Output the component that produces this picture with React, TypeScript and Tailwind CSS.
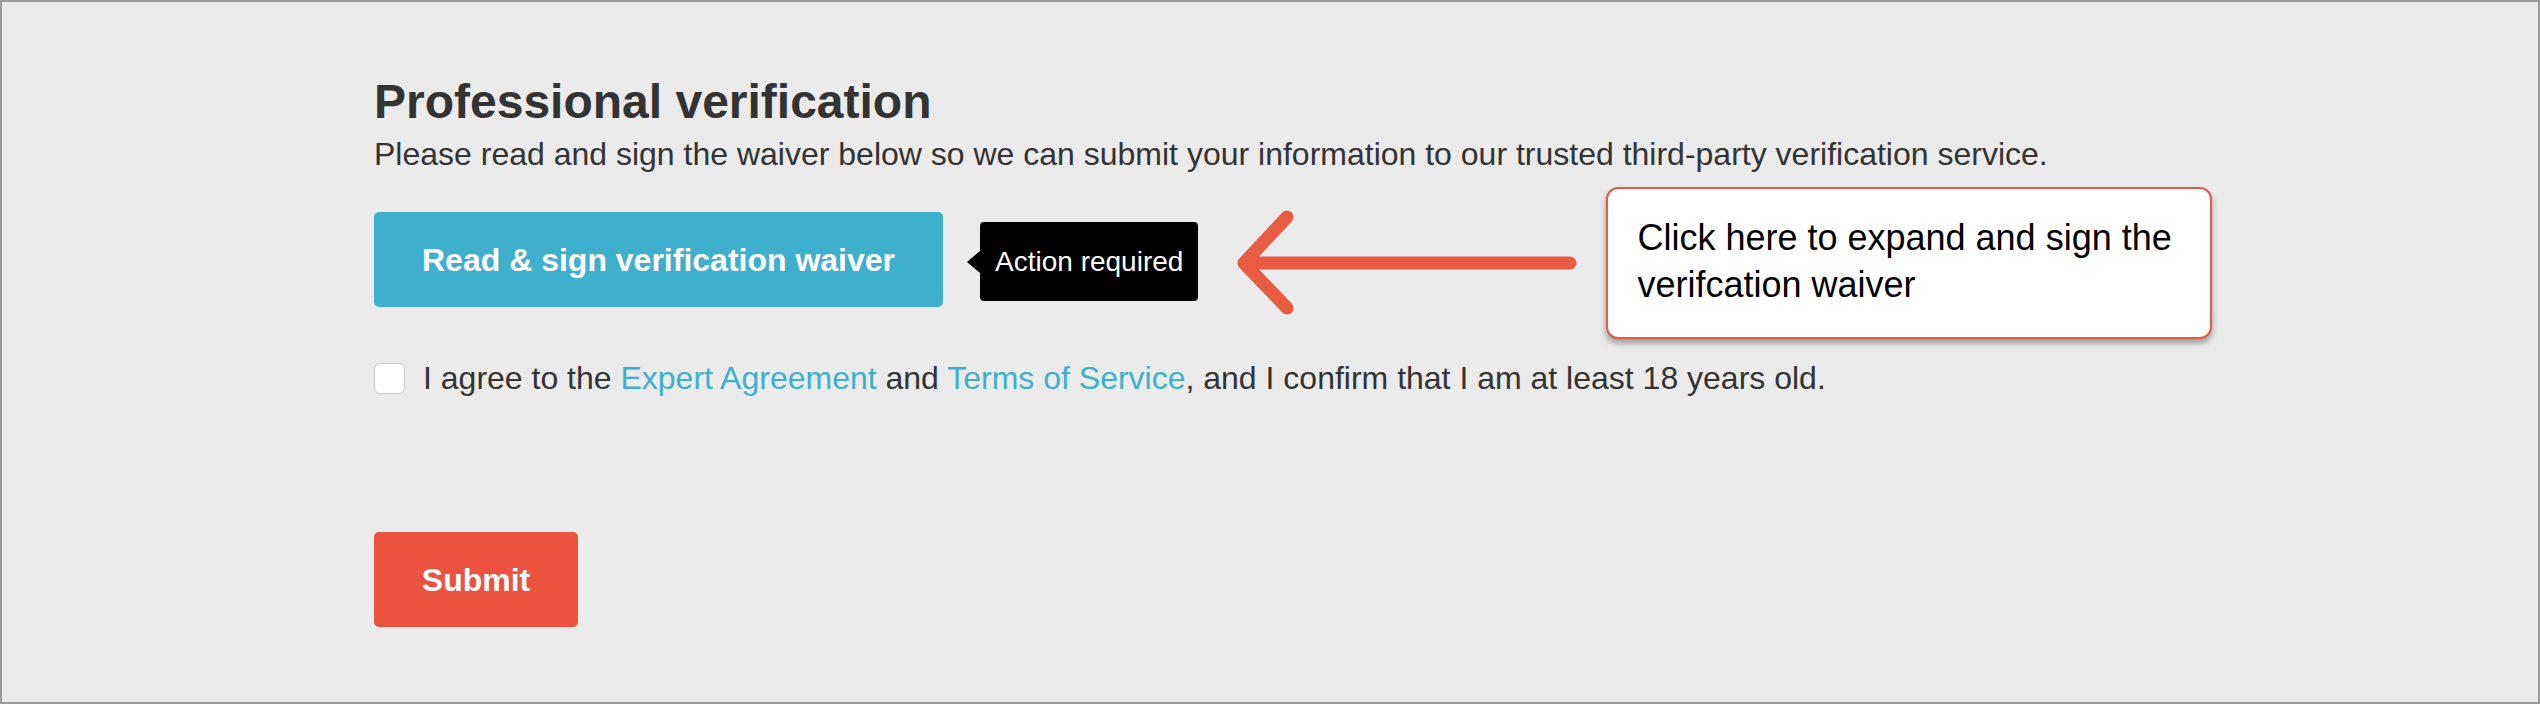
import React from 'react';

const font = { fontFamily: '"Liberation Sans", Arial, Helvetica, sans-serif' };

// little black tooltip with a pointer on its left side
const Tooltip = ({ children }: { children: React.ReactNode }) => (
  <div className="flex items-center mt-[4px] ml-[24px]">
    <div className="w-0 h-0 border-y-[11px] border-y-transparent border-r-[13px] border-r-black" />
    <div className="h-[79px] px-[15px] flex items-center bg-black rounded-[4px] text-white text-[28px] leading-none whitespace-nowrap">
      {children}
    </div>
  </div>
);

// red annotation arrow pointing left
const PointerArrow = () => (
  <svg className="ml-[33px] overflow-visible shrink-0" width="352" height="95" viewBox="0 0 352 95" fill="none">
    <path d="M13 51 L56 5 M13 51 L56 96 M13 51 L339 51" stroke="#e85c43" strokeWidth="13" strokeLinecap="round" strokeLinejoin="round" />
  </svg>
);

export default function App() {
  return (
    <div style={font} className="w-[2540px] h-[704px] border-2 border-[#999999] bg-[#ebebeb] pl-[372px] pt-[74px] text-[#333333]">
      <h1 className="text-[48px] font-bold leading-[48px] pt-[2px]">Professional verification</h1>
      <p className="mt-[8px] text-[32px] leading-[40px]">
        Please read and sign the waiver below so we can submit your information to our trusted third-party verification service.
      </p>

      <div className="mt-[38px] flex items-center h-[95px]">
        <button className="h-[95px] px-[48px] bg-[#3eb0cd] text-white text-[32px] font-bold rounded-[5px] whitespace-nowrap">
          Read &amp; sign verification waiver
        </button>
        <Tooltip>Action required</Tooltip>
        <PointerArrow />
        <div className="ml-[23px] mt-[-25px] mb-[-32px] w-[606px] h-[152px] bg-white border-2 border-[#e65a42] rounded-[12px] shadow-[0_4px_6px_rgba(0,0,0,0.35)] pl-[29px] pr-[20px] pt-[25px] text-black text-[36px] leading-[47px]">
          Click here to expand and sign the verifcation waiver
        </div>
      </div>

      <label className="mt-[51px] flex items-center gap-[18px] text-[32px] leading-[40px]">
        <span className="w-[31px] h-[31px] bg-white border-[1.5px] border-[#c8c8c8] rounded-[6px] shrink-0" />
        <span>
          I agree to the <a className="text-[#3eb0cd]">Expert Agreement</a> and{' '}
          <a className="text-[#3eb0cd]">Terms of Service</a>, and I confirm that I am at least 18 years old.
        </span>
      </label>

      <button className="mt-[134px] h-[95px] w-[204px] bg-[#eb5340] text-white text-[32px] font-bold rounded-[5px]">
        Submit
      </button>
    </div>
  );
}
